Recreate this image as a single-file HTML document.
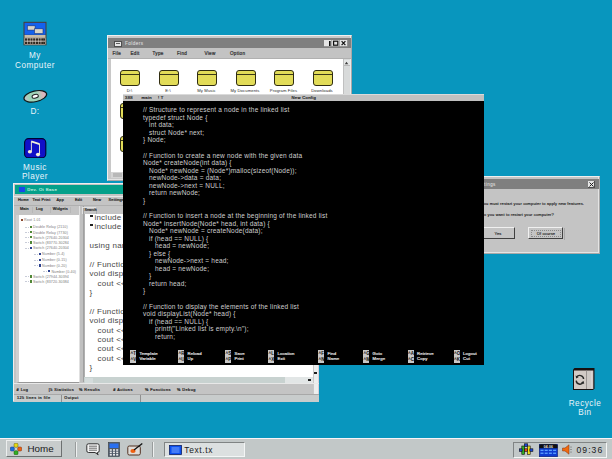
<!DOCTYPE html>
<html><head><meta charset="utf-8">
<style>
*{margin:0;padding:0;box-sizing:border-box}
html,body{width:612px;height:459px;overflow:hidden}
body{position:relative;background:#0896be;font-family:"Liberation Sans",sans-serif;color:#000}
.a{position:absolute}
.t{position:absolute;white-space:nowrap;line-height:1}
.dl{color:#e8f4fa;font-size:8.2px;letter-spacing:0.5px;text-align:center;transform:scaleY(1.08)}
.cl{position:absolute;white-space:pre;font-size:6.5px;letter-spacing:0.2px;line-height:7.55px;color:#d0d0d0}
.es{font-size:4.2px;color:#202020;letter-spacing:0.3px;-webkit-text-stroke:0.2px #202020}
.kb{position:absolute;top:256px;width:6px;height:12.5px;background:#c8c8c8}
.kk{position:absolute;left:0.5px;font-size:4.5px;line-height:5px;color:#101010;font-weight:bold;white-space:nowrap}
.kl{position:absolute;font-size:4.2px;line-height:5px;color:#e0e0e0;letter-spacing:0.15px;white-space:nowrap;-webkit-text-stroke:0.2px #e0e0e0}
.tb{position:absolute;top:4.5px;width:7.5px;height:6.5px;background:#e8e8e8;border-right:1px solid #404040;border-bottom:1px solid #404040}
.mi{font-size:4.6px;color:#303030;letter-spacing:0.3px;-webkit-text-stroke:0.2px #303030}
.fd{position:absolute;width:20px;height:16px;background:#e2dc58;border:1.3px solid #302c10;border-radius:3px}
.fdl{position:absolute;left:0;top:3px;width:100%;height:1.2px;background:#3a3818}
.fl{position:absolute;width:44px;text-align:center;font-size:4.2px;color:#282828;white-space:nowrap;line-height:5px;letter-spacing:0.1px}
.dm{font-size:3.8px;color:#202020;letter-spacing:0.2px;-webkit-text-stroke:0.2px #202020}
.dc{position:absolute;white-space:pre;font-size:8px;letter-spacing:0.25px;line-height:9px;color:#484848}
.dt{position:absolute;white-space:nowrap;font-size:3.6px;line-height:4.5px;color:#7a7a7a;letter-spacing:0.1px}
.dg{font-size:4px;color:#202020;letter-spacing:0.13px;-webkit-text-stroke:0.12px #202020}
</style></head><body>

<!-- Desktop icons -->
<svg class="a" id="mycomp" style="left:23px;top:21px" width="24" height="25" viewBox="0 0 24 25">
  <rect x="0.5" y="0.8" width="23" height="23.5" fill="#4a3c30"/>
  <rect x="1.5" y="1.8" width="21" height="12" fill="#1462ee"/>
  <rect x="4.3" y="4.8" width="7.8" height="4.3" fill="#d8d4c8" stroke="#103080" stroke-width="0.6"/>
  <rect x="11.5" y="7.8" width="8.5" height="4.8" fill="#d8d4c8" stroke="#103080" stroke-width="0.6"/>
  <rect x="1.5" y="14" width="21" height="2.5" fill="#c8bca8"/>
  <rect x="1.5" y="16.5" width="21" height="7" fill="#e0d8d0"/>
  <g fill="#302820"><rect x="2" y="17.3" width="2.2" height="2.4"/><rect x="4.7" y="17.3" width="2.2" height="2.4"/><rect x="7.4" y="17.3" width="2.2" height="2.4"/><rect x="10.1" y="17.3" width="2.2" height="2.4"/><rect x="12.8" y="17.3" width="2.2" height="2.4"/><rect x="15.5" y="17.3" width="2.2" height="2.4"/><rect x="18.2" y="17.3" width="2.2" height="2.4"/><rect x="20.2" y="17.3" width="1.8" height="2.4"/>
  <rect x="2" y="20.6" width="2.2" height="2.4"/><rect x="4.7" y="20.6" width="2.2" height="2.4"/><rect x="7.4" y="20.6" width="2.2" height="2.4"/><rect x="10.1" y="20.6" width="2.2" height="2.4"/><rect x="12.8" y="20.6" width="2.2" height="2.4"/><rect x="15.5" y="20.6" width="2.2" height="2.4"/><rect x="18.2" y="20.6" width="2.2" height="2.4"/><rect x="20.2" y="20.6" width="1.8" height="2.4"/></g>
</svg>
<div class="t dl" style="left:10px;top:51.8px;width:50px">My</div>
<div class="t dl" style="left:10px;top:61.8px;width:50px">Computer</div>

<svg class="a" style="left:22px;top:89px" width="27" height="15" viewBox="0 0 27 15">
  <defs><linearGradient id="dg" x1="0" y1="0" x2="1" y2="0">
  <stop offset="0" stop-color="#c8c0c8"/><stop offset="0.25" stop-color="#9cd4b8"/><stop offset="0.6" stop-color="#a0d4b8"/><stop offset="0.85" stop-color="#e0b4bc"/><stop offset="1" stop-color="#c8b8d0"/></linearGradient></defs>
  <ellipse cx="13.3" cy="7.3" rx="11.6" ry="5.3" transform="rotate(-13 13.3 7.3)" fill="url(#dg)" stroke="#101818" stroke-width="1.2"/>
  <ellipse cx="13.2" cy="7.3" rx="3.2" ry="1.8" transform="rotate(-13 13.2 7.3)" fill="#fff" stroke="#202020" stroke-width="1"/>
</svg>
<div class="t dl" style="left:10px;top:107.8px;width:50px">D:</div>

<svg class="a" style="left:24px;top:137.5px" width="22.5" height="20.5" viewBox="0 0 22.5 20.5">
  <rect x="0.6" y="0.6" width="21.2" height="19.3" rx="4" fill="#1010c8" stroke="#000030" stroke-width="1.1"/>
  <path d="M7.4 13.6 V3.6" stroke="#f4f0d8" stroke-width="0.9" fill="none"/>
  <path d="M7.2 3.4 L15.6 6.2" stroke="#f4f0d8" stroke-width="1.8" fill="none"/>
  <path d="M15.5 6 V16.5" stroke="#f4f0d8" stroke-width="0.9" fill="none"/>
  <ellipse cx="5.9" cy="13.7" rx="2.1" ry="1.8" fill="#f4f0d8"/>
  <ellipse cx="14" cy="16.6" rx="2.1" ry="1.8" fill="#f4f0d8"/>
</svg>
<div class="t dl" style="left:10px;top:163.8px;width:50px">Music</div>
<div class="t dl" style="left:10px;top:172.8px;width:50px">Player</div>

<!-- Recycle bin -->
<svg class="a" style="left:572px;top:367px" width="24" height="24" viewBox="0 0 24 24">
  <path d="M1 2.5 L2.5 1 H22.5 V21.5 L21 23 H1 Z" fill="#181010"/>
  <rect x="2" y="3.5" width="12.5" height="18.5" fill="#d2cac6"/>
  <rect x="14.5" y="3.5" width="6.8" height="18.5" fill="#cfc9c6"/>
  <path d="M14.5 3.5 V22" stroke="#9a9492" stroke-width="0.9"/>
  <path d="M19.8 4 V21.5" stroke="#e8e4e2" stroke-width="0.6"/>
  <path d="M11.6 12 A3.8 3.8 0 0 0 4.6 10.2" stroke="#282828" stroke-width="1.4" fill="none"/>
  <path d="M4.2 13.6 A3.8 3.8 0 0 0 11.2 15.4" stroke="#282828" stroke-width="1.4" fill="none"/>
  <path d="M3.6 8.6 L4.2 11.6 L6.8 10 Z M12.2 17 L11.6 14 L9 15.6 Z" fill="#282828"/>
</svg>
<div class="t dl" style="left:560px;top:399.8px;width:50px">Recycle</div>
<div class="t dl" style="left:560px;top:408.8px;width:50px">Bin</div>

<!-- Folders window -->
<div class="a" id="folders" style="left:107px;top:35px;width:245px;height:146px;background:#c8c8c8;border:1px solid #f0f0f0;border-right-color:#a8a8a8;border-bottom-color:#a8a8a8;box-shadow:inset -1px -1px 0 #e4e4e4">
  <div class="a" style="left:0;top:2px;width:243px;height:10px;background:#7f7f7f"></div>
  <div class="a" style="left:6px;top:4.5px;width:8px;height:6.5px;background:#e8e8e8;border:1px solid #505050"></div>
  <div class="a" style="left:8px;top:7px;width:4px;height:1px;background:#606060"></div>
  <div class="t" style="left:17px;top:6.2px;font-size:4.6px;color:#d0d0d0;letter-spacing:0.45px;-webkit-text-stroke:0.15px #d0d0d0">Folders</div>
  <svg class="a" style="left:216px;top:3.5px" width="24" height="7" viewBox="0 0 24 7">
    <rect x="0" y="0" width="23.2" height="6.5" fill="#e4e4e4"/>
    <path d="M0 6.5 H23.2 M7.7 0 V6.5 M15.4 0 V6.5" stroke="#8a8a8a" stroke-width="0.7"/>
    <rect x="5" y="1" width="1.6" height="5" fill="#101010"/>
    <rect x="9.6" y="1.2" width="4.2" height="4" fill="none" stroke="#101010" stroke-width="1.2"/>
    <path d="M17.6 1.2 L21.4 5.2 M21.4 1.2 L17.6 5.2" stroke="#101010" stroke-width="1.2"/>
  </svg>
  <div class="a" style="left:0;top:12px;width:243px;height:10.5px;background:#c3c3c3;border-bottom:0.7px solid #b0b0b0"></div>
  <div class="t mi" style="left:4.5px;top:16.4px">File</div>
  <div class="t mi" style="left:22.5px;top:16.4px">Edit</div>
  <div class="t mi" style="left:44.5px;top:16.4px">Type</div>
  <div class="t mi" style="left:69px;top:16.4px">Find</div>
  <div class="t mi" style="left:96.5px;top:16.4px">View</div>
  <div class="t mi" style="left:122px;top:16.4px">Option</div>
  <div class="a" style="left:3px;top:23px;width:231.5px;height:113px;background:#fff;overflow:hidden">

  </div>
<div class="fd" style="left:12.3px;top:34px"><div class="fdl"></div></div>
<div class="fl" style="left:-0.5px;top:51.7px">D:\</div>
<div class="fd" style="left:50.8px;top:34px"><div class="fdl"></div></div>
<div class="fl" style="left:38.0px;top:51.7px">E:\</div>
<div class="fd" style="left:89.3px;top:34px"><div class="fdl"></div></div>
<div class="fl" style="left:76.5px;top:51.7px">My Music</div>
<div class="fd" style="left:127.8px;top:34px"><div class="fdl"></div></div>
<div class="fl" style="left:115.0px;top:51.7px">My Documents</div>
<div class="fd" style="left:166.3px;top:34px"><div class="fdl"></div></div>
<div class="fl" style="left:153.5px;top:51.7px">Program Files</div>
<div class="fd" style="left:204.8px;top:34px"><div class="fdl"></div></div>
<div class="fl" style="left:192.0px;top:51.7px">Downloads</div>
<div class="fd" style="left:12.3px;top:67px"><div class="fdl"></div></div>
<div class="fd" style="left:50.8px;top:67px"><div class="fdl"></div></div>
<div class="fd" style="left:89.3px;top:67px"><div class="fdl"></div></div>
<div class="fd" style="left:127.8px;top:67px"><div class="fdl"></div></div>
<div class="fd" style="left:166.3px;top:67px"><div class="fdl"></div></div>
<div class="fd" style="left:204.8px;top:67px"><div class="fdl"></div></div>
<div class="fd" style="left:12.3px;top:100px"><div class="fdl"></div></div>
<div class="fd" style="left:50.8px;top:100px"><div class="fdl"></div></div>
<div class="fd" style="left:89.3px;top:100px"><div class="fdl"></div></div>
<div class="fd" style="left:127.8px;top:100px"><div class="fdl"></div></div>
<div class="fd" style="left:166.3px;top:100px"><div class="fdl"></div></div>
<div class="fd" style="left:204.8px;top:100px"><div class="fdl"></div></div>
  <div class="a" style="left:234.5px;top:23px;width:7px;height:113px;background:#d8dada;border-left:1px solid #c0c0c0"></div>
  <div class="a" style="left:235.5px;top:24px;width:6px;height:6px;background:#e4e6e6;border-bottom:0.6px solid #b8b8b8"></div>
  <svg class="a" style="left:236px;top:25px" width="5" height="4"><path d="M2.5 0.8 L4.3 3.2 H0.7 Z" fill="#404040"/></svg>
  <div class="a" style="left:241.5px;top:23px;width:1.5px;height:113px;background:#e8e8e8"></div>
  <div class="a" style="left:3px;top:136px;width:233px;height:6px;background:#d4d4d4"></div>
  <div class="a" style="left:5px;top:137px;width:9px;height:4px;background:#b8b8b8"></div>
</div>

<!-- Dev window -->
<div class="a" id="dev" style="left:13px;top:183px;width:306px;height:219px;background:#c4c4c4;border:1px solid #eeeeee;border-right-color:#a8a8a8;border-bottom-color:#a8a8a8;box-shadow:inset -1px -1px 0 #e4e4e4">
<div class="a" style="left:1px;top:1px;width:303px;height:8.8px;background:#04a08a"></div>
<div class="a" style="left:4.8px;top:2.8px;width:6.4px;height:5px;background:#1848e8"></div>
<div class="t" style="left:13.2px;top:3.6px;font-size:4.2px;color:#c0f0e0;letter-spacing:0.45px;-webkit-text-stroke:0.15px #c0f0e0">Dev. Ot Base</div>
<div class="a" style="left:0;top:12px;width:305px;height:1px;background:#e8e8e8"></div>
<div class="t dm" style="left:3.8999999999999986px;top:14.7px">Home</div>
<div class="t dm" style="left:18.6px;top:14.7px">Text Print</div>
<div class="t dm" style="left:42.6px;top:14.7px">App</div>
<div class="t dm" style="left:60.900000000000006px;top:14.7px">Edit</div>
<div class="t dm" style="left:78.9px;top:14.7px">New</div>
<div class="t dm" style="left:94.6px;top:14.7px">Settings</div>
<div class="a" style="left:0;top:21px;width:305px;height:1px;background:#b0b0b0"></div>
<div class="t dm" style="left:5.899999999999999px;top:23.6px">Main</div>
<div class="t dm" style="left:22px;top:23.6px">Log</div>
<div class="t dm" style="left:38.7px;top:23.6px">Widgets</div>
<div class="a" style="left:18.1px;top:22.5px;width:0.7px;height:6px;background:#b8b8b8"></div>
<div class="a" style="left:35.8px;top:22.5px;width:0.7px;height:6px;background:#b8b8b8"></div>
<div class="a" style="left:55.900000000000006px;top:22.5px;width:0.7px;height:6px;background:#b8b8b8"></div>
<div class="a" style="left:2px;top:31px;width:62.5px;height:168px;background:#fff;border-left:3px solid #d0d0d0;border-bottom:1px solid #989898"></div>
<div class="a" style="left:64.5px;top:22px;width:5px;height:176px;background:#c0c0c0;border-left:1px solid #e0e0e0;border-right:1px solid #a0a0a0"></div>
<div class="a" style="left:68px;top:22.8px;width:15px;height:7px;border:0.6px solid #e0e0e0;border-right-color:#a8a8a8;border-bottom:none"></div>
<div class="t dm" style="left:70.5px;top:24.5px;font-size:3.6px;letter-spacing:0.1px">Search</div>
<div class="a" style="left:69.5px;top:30px;width:230px;height:163px;background:#fff;border-left:1px solid #b0b0b0"></div>
<div class="a" style="left:69.5px;top:193px;width:229px;height:6px;background:#c8d2d0"></div>
<div class="a" style="left:70.5px;top:193.5px;width:8px;height:5px;background:#d4dcdc"></div>
<div class="a" style="left:271px;top:193px;width:27.5px;height:6px;background:#e2e6e6"></div>
<div class="a" style="left:298.5px;top:28.5px;width:6.5px;height:189px;background:#eceeee;border-left:1px solid #c8c8c8;border-right:1px solid #d8d0d8"></div>

<div class="a" style="left:294px;top:195px;width:3px;height:2px;background:#202020"></div>
<div class="a" style="left:300px;top:188px;width:3px;height:2px;background:#202020"></div>
<div class="dc" style="left:75.6px;top:29.00px"><span style="display:inline-block;width:2.6px;height:2px;background:#202020;vertical-align:top;margin:2px 1.6px 0 0.6px"></span>include &lt;iostream&gt;</div>
<div class="dc" style="left:75.6px;top:38.37px"><span style="display:inline-block;width:2.6px;height:2px;background:#202020;vertical-align:top;margin:2px 1.6px 0 0.6px"></span>include &lt;string&gt;</div>
<div class="dc" style="left:75.6px;top:57.12px">using namespace std;</div>
<div class="dc" style="left:75.6px;top:75.87px">// Function to display</div>
<div class="dc" style="left:75.6px;top:85.25px">void displayMessage() {</div>
<div class="dc" style="left:83.6px;top:94.62px">cout &lt;&lt; "Hello";</div>
<div class="dc" style="left:75.6px;top:104.00px">}</div>
<div class="dc" style="left:75.6px;top:122.75px">// Function to display</div>
<div class="dc" style="left:75.6px;top:132.12px">void displayInfo() {</div>
<div class="dc" style="left:83.6px;top:141.50px">cout &lt;&lt; "Name";</div>
<div class="dc" style="left:83.6px;top:150.87px">cout &lt;&lt; "Age";</div>
<div class="dc" style="left:83.6px;top:160.25px">cout &lt;&lt; "City";</div>
<div class="dc" style="left:83.6px;top:169.62px">cout &lt;&lt; "Job";</div>
<div class="dc" style="left:75.6px;top:179.00px">}</div>
<div class="a" style="left:6.800000000000001px;top:34.60px;width:2.4px;height:2.4px;background:#8a4a30"></div>
<div class="dt" style="left:10.10px;top:34.30px">Root 1.01</div>
<div class="a" style="left:15.8px;top:41.50px;width:2.4px;height:2.4px;background:#508838"></div>
<div class="dt" style="left:19.10px;top:41.20px">Double Relay (2110)</div>
<div class="a" style="left:10.8px;top:42.50px;width:4px;height:0;border-top:0.6px dotted #c8ccd8"></div>
<div class="a" style="left:15.8px;top:46.80px;width:2.4px;height:2.4px;background:#508838"></div>
<div class="dt" style="left:19.10px;top:46.50px">Double Relay (7730)</div>
<div class="a" style="left:10.8px;top:47.80px;width:4px;height:0;border-top:0.6px dotted #c8ccd8"></div>
<div class="a" style="left:15.8px;top:52.00px;width:2.4px;height:2.4px;background:#508838"></div>
<div class="dt" style="left:19.10px;top:51.70px">Switch (27640-20304</div>
<div class="a" style="left:10.8px;top:53.00px;width:4px;height:0;border-top:0.6px dotted #c8ccd8"></div>
<div class="a" style="left:15.8px;top:57.20px;width:2.4px;height:2.4px;background:#508838"></div>
<div class="dt" style="left:19.10px;top:56.90px">Switch (83770-30284</div>
<div class="a" style="left:10.8px;top:58.20px;width:4px;height:0;border-top:0.6px dotted #c8ccd8"></div>
<div class="a" style="left:15.8px;top:62.50px;width:2.4px;height:2.4px;background:#2a4090"></div>
<div class="dt" style="left:19.10px;top:62.20px">Switch (27640-20304</div>
<div class="a" style="left:10.8px;top:63.50px;width:4px;height:0;border-top:0.6px dotted #c8ccd8"></div>
<div class="a" style="left:24.799999999999997px;top:68.60px;width:2.4px;height:2.4px;background:#2a4090"></div>
<div class="dt" style="left:28.10px;top:68.30px">Number (5-4)</div>
<div class="a" style="left:19.799999999999997px;top:69.60px;width:4px;height:0;border-top:0.6px dotted #c8ccd8"></div>
<div class="a" style="left:24.799999999999997px;top:74.70px;width:2.4px;height:2.4px;background:#2a4090"></div>
<div class="dt" style="left:28.10px;top:74.40px">Number (0-15)</div>
<div class="a" style="left:19.799999999999997px;top:75.70px;width:4px;height:0;border-top:0.6px dotted #c8ccd8"></div>
<div class="a" style="left:24.799999999999997px;top:80.40px;width:2.4px;height:2.4px;background:#2a4090"></div>
<div class="dt" style="left:28.10px;top:80.10px">Number (0-20)</div>
<div class="a" style="left:19.799999999999997px;top:81.40px;width:4px;height:0;border-top:0.6px dotted #c8ccd8"></div>
<div class="a" style="left:34.1px;top:86.00px;width:2.4px;height:2.4px;background:#2a4090"></div>
<div class="dt" style="left:37.40px;top:85.70px">Number (0-40)</div>
<div class="a" style="left:29.1px;top:87.00px;width:4px;height:0;border-top:0.6px dotted #c8ccd8"></div>
<div class="a" style="left:15.8px;top:91.20px;width:2.4px;height:2.4px;background:#508838"></div>
<div class="dt" style="left:19.10px;top:90.90px">Switch (27944-30394</div>
<div class="a" style="left:10.8px;top:92.20px;width:4px;height:0;border-top:0.6px dotted #c8ccd8"></div>
<div class="a" style="left:15.8px;top:96.40px;width:2.4px;height:2.4px;background:#508838"></div>
<div class="dt" style="left:19.10px;top:96.10px">Switch (83720-30384</div>
<div class="a" style="left:10.8px;top:97.40px;width:4px;height:0;border-top:0.6px dotted #c8ccd8"></div>
<div class="a" style="left:0;top:199px;width:305px;height:1px;background:#e8e8e8"></div>
<div class="t dm" style="left:2.6px;top:205.3px;letter-spacing:0.45px"># Log</div>
<div class="t dm" style="left:34.8px;top:205.3px;letter-spacing:0.45px">[5 Statistics</div>
<div class="t dm" style="left:65.0px;top:205.3px;letter-spacing:0.45px">% Results</div>
<div class="t dm" style="left:99.3px;top:205.3px;letter-spacing:0.45px"># Actions</div>
<div class="t dm" style="left:131.0px;top:205.3px;letter-spacing:0.45px">% Functions</div>
<div class="t dm" style="left:163.0px;top:205.3px;letter-spacing:0.45px">% Debug</div>
<div class="a" style="left:0;top:209.5px;width:305px;height:1px;background:#a8a8a8"></div>
<div class="a" style="left:0;top:210.5px;width:305px;height:7.5px;background:#c8cccc"></div>
<div class="t dm" style="left:2.9px;top:213px;letter-spacing:0.5px">125 lines in file</div>
<div class="t dm" style="left:50.3px;top:213px;letter-spacing:0.5px">Output</div>
<div class="a" style="left:47px;top:211px;width:0.8px;height:6.5px;background:#909090"></div>
<div class="a" style="left:126.19999999999999px;top:211px;width:0.8px;height:6.5px;background:#909090"></div>
</div>

<!-- Dialog -->
<div class="a" id="dlg" style="left:440px;top:176px;width:160px;height:78px;background:#c4c4c4;border:1px solid #eeeeee;border-right-color:#a8a8a8;border-bottom-color:#a8a8a8;box-shadow:inset -1px -1px 0 #e4e4e4">
  <div class="a" style="left:1px;top:2px;width:157px;height:9.5px;background:#7f7f7f"></div>
  <div class="t" style="left:35px;top:5.6px;font-size:4.6px;color:#d8d8d8;letter-spacing:0.4px;-webkit-text-stroke:0.1px #d8d8d8">Settings</div>
  <div class="a" style="left:146.5px;top:3.5px;width:7px;height:7px;background:#e4e4e4;border-right:1px solid #505050;border-bottom:1px solid #505050"></div>
  <svg class="a" style="left:147.5px;top:4.5px" width="5" height="5"><path d="M0.5 0.5L4.5 4.5M4.5 0.5L0.5 4.5" stroke="#202020" stroke-width="1"/></svg>
  <div class="t dg" style="left:40.3px;top:25.2px">You must restart your computer to apply new features.</div>
  <div class="t dg" style="left:40px;top:35.5px">Do you want to restart your computer?</div>
  <div class="a" style="left:40px;top:50px;width:34px;height:12px;border:1px solid #f0f0f0;border-right-color:#404040;border-bottom-color:#404040"></div>
  <div class="t dg" style="left:53.5px;top:54.8px">Yes</div>
  <div class="a" style="left:87px;top:50px;width:35px;height:12px;border:1px solid #f0f0f0;border-right-color:#404040;border-bottom-color:#404040"></div>
  <div class="a" style="left:89.5px;top:52.5px;width:30px;height:7px;border:0.6px dotted #8a8a8a"></div>
  <div class="a" style="left:122.5px;top:50.5px;width:0.8px;height:12px;background:#a8a8a8"></div>
  <div class="t dg" style="left:95.7px;top:54.8px">Of course</div>
</div>

<!-- Editor -->
<div class="a" id="ed" style="left:123px;top:94px;width:361px;height:271px;background:#000">
  <div class="a" style="left:0;top:0;width:361px;height:1px;background:#dadada"></div>
  <div class="a" style="left:0;top:1px;width:361px;height:6px;background:#c0c0c0"></div>
  <div class="t es" style="left:2px;top:1.5px">388</div>
  <div class="t es" style="left:18.5px;top:1.5px">main</div>
  <div class="t es" style="left:35px;top:1.5px">! T</div>
  <div class="t es" style="left:168.5px;top:1.5px">New Config</div>
  <div class="a" style="left:20px;top:12.3px;width:340px;height:240px">
<div class="cl" style="top:0.00px;left:0px">// Structure to represent a node in the linked list</div>
<div class="cl" style="top:7.55px;left:0px">typedef struct Node {</div>
<div class="cl" style="top:15.10px;left:6px">int data;</div>
<div class="cl" style="top:22.65px;left:6px">struct Node* next;</div>
<div class="cl" style="top:30.20px;left:0px">} Node;</div>
<div class="cl" style="top:45.30px;left:0px">// Function to create a new node with the given data</div>
<div class="cl" style="top:52.85px;left:0px">Node* createNode(int data) {</div>
<div class="cl" style="top:60.40px;left:6px">Node* newNode = (Node*)malloc(sizeof(Node));</div>
<div class="cl" style="top:67.95px;left:6px">newNode-&gt;data = data;</div>
<div class="cl" style="top:75.50px;left:6px">newNode-&gt;next = NULL;</div>
<div class="cl" style="top:83.05px;left:6px">return newNode;</div>
<div class="cl" style="top:90.60px;left:0px">}</div>
<div class="cl" style="top:105.70px;left:0px">// Function to insert a node at the beginning of the linked list</div>
<div class="cl" style="top:113.25px;left:0px">Node* insertNode(Node* head, int data) {</div>
<div class="cl" style="top:120.80px;left:6px">Node* newNode = createNode(data);</div>
<div class="cl" style="top:128.35px;left:6px">if (head == NULL) {</div>
<div class="cl" style="top:135.90px;left:12px">head = newNode;</div>
<div class="cl" style="top:143.45px;left:6px">} else {</div>
<div class="cl" style="top:151.00px;left:12px">newNode-&gt;next = head;</div>
<div class="cl" style="top:158.55px;left:12px">head = newNode;</div>
<div class="cl" style="top:166.10px;left:6px">}</div>
<div class="cl" style="top:173.65px;left:6px">return head;</div>
<div class="cl" style="top:181.20px;left:0px">}</div>
<div class="cl" style="top:196.30px;left:0px">// Function to display the elements of the linked list</div>
<div class="cl" style="top:203.85px;left:0px">void displayList(Node* head) {</div>
<div class="cl" style="top:211.40px;left:6px">if (head == NULL) {</div>
<div class="cl" style="top:218.95px;left:12px">printf(&quot;Linked list is empty.\n&quot;);</div>
<div class="cl" style="top:226.50px;left:12px">return;</div>
  </div>
<div class="kb" style="left:7px"><div class="kk" style="top:1px">^T</div><div class="kk" style="top:6.5px">^V</div></div>
<div class="kl" style="left:16.5px;top:257.3px">Template</div><div class="kl" style="left:16.5px;top:262.1px">Variable</div>
<div class="kb" style="left:55px"><div class="kk" style="top:1px">^R</div><div class="kk" style="top:6.5px">^U</div></div>
<div class="kl" style="left:64.5px;top:257.3px">Reload</div><div class="kl" style="left:64.5px;top:262.1px">Up</div>
<div class="kb" style="left:102px"><div class="kk" style="top:1px">^S</div><div class="kk" style="top:6.5px">^P</div></div>
<div class="kl" style="left:111.5px;top:257.3px">Save</div><div class="kl" style="left:111.5px;top:262.1px">Print</div>
<div class="kb" style="left:145px"><div class="kk" style="top:1px">^L</div><div class="kk" style="top:6.5px">^X</div></div>
<div class="kl" style="left:154.5px;top:257.3px">Location</div><div class="kl" style="left:154.5px;top:262.1px">Exit</div>
<div class="kb" style="left:195px"><div class="kk" style="top:1px">^F</div><div class="kk" style="top:6.5px">^N</div></div>
<div class="kl" style="left:204.5px;top:257.3px">Find</div><div class="kl" style="left:204.5px;top:262.1px">Name</div>
<div class="kb" style="left:240px"><div class="kk" style="top:1px">^G</div><div class="kk" style="top:6.5px">^M</div></div>
<div class="kl" style="left:249.5px;top:257.3px">Goto</div><div class="kl" style="left:249.5px;top:262.1px">Merge</div>
<div class="kb" style="left:284.5px"><div class="kk" style="top:1px">^A</div><div class="kk" style="top:6.5px">^C</div></div>
<div class="kl" style="left:294.0px;top:257.3px">Retrieve</div><div class="kl" style="left:294.0px;top:262.1px">Copy</div>
<div class="kb" style="left:330.5px"><div class="kk" style="top:1px">^O</div><div class="kk" style="top:6.5px">^K</div></div>
<div class="kl" style="left:340.0px;top:257.3px">Logout</div><div class="kl" style="left:340.0px;top:262.1px">Cut</div>
</div>

<!-- Taskbar -->
<div class="a" id="taskbar" style="left:0;top:438px;width:612px;height:21px;background:#c2c8c8;border-top:1px solid #f8f4f8">
  <div class="a" style="left:5.5px;top:1px;width:56px;height:17px;background:#c8cccc;border:1px solid #eceeee;border-right-color:#6c7070;border-bottom-color:#6c7070"></div>
  <svg class="a" style="left:10px;top:4px" width="12" height="12" viewBox="0 0 12 12">
    <rect x="4" y="0.3" width="4" height="4" rx="1.2" fill="#e8d810" stroke="#5a5a20" stroke-width="0.5"/>
    <rect x="0.3" y="4" width="4" height="4" rx="1.2" fill="#1870e0" stroke="#203070" stroke-width="0.5"/>
    <rect x="7.7" y="4" width="4" height="4" rx="1.2" fill="#f06010" stroke="#703010" stroke-width="0.5"/>
    <rect x="4" y="7.7" width="4" height="4" rx="1.2" fill="#30b020" stroke="#205010" stroke-width="0.5"/>
  </svg>
  <div class="t" style="left:27.5px;top:5.2px;font-size:9.8px;color:#1a1a1a;letter-spacing:0px">Home</div>
  <div class="a" style="left:74.5px;top:3px;width:1px;height:15px;background:#989c9c;box-shadow:1px 0 0 #eef0f0"></div>
  <svg class="a" style="left:85.5px;top:4px" width="14" height="13" viewBox="0 0 14 13">
    <path d="M2.5 0.8 H11.5 Q13.2 0.8 13.2 2.5 V7.8 Q13.2 9.5 11.5 9.5 H11 L12.2 11.8 L9 9.5 H2.5 Q0.8 9.5 0.8 7.8 V2.5 Q0.8 0.8 2.5 0.8 Z" fill="#f4f4f4" stroke="#202020" stroke-width="0.9"/>
    <path d="M3 3.2 H11 M3 5.2 H11 M3 7.2 H11" stroke="#303030" stroke-width="0.7"/>
  </svg>
  <svg class="a" style="left:107.5px;top:3px" width="12" height="15" viewBox="0 0 12 15">
    <rect x="0.5" y="0.5" width="11" height="13.8" fill="#505a68" stroke="#303840" stroke-width="0.6"/>
    <rect x="1.5" y="1.5" width="9" height="4.5" fill="#2a70f0"/>
    <g fill="#e8e8e8"><rect x="1.8" y="7.2" width="2" height="1.6"/><rect x="5" y="7.2" width="2" height="1.6"/><rect x="8.2" y="7.2" width="2" height="1.6"/>
    <rect x="1.8" y="9.6" width="2" height="1.6"/><rect x="5" y="9.6" width="2" height="1.6"/><rect x="8.2" y="9.6" width="2" height="1.6"/>
    <rect x="1.8" y="12" width="2" height="1.6"/><rect x="5" y="12" width="2" height="1.6"/><rect x="8.2" y="12" width="2" height="1.6"/></g>
  </svg>
  <svg class="a" style="left:126.5px;top:3.5px" width="16" height="13" viewBox="0 0 16 13">
    <rect x="0.8" y="3" width="12.5" height="9" rx="1.5" fill="#e0dcd8" stroke="#503020" stroke-width="1"/>
    <ellipse cx="6" cy="8" rx="2.6" ry="1.9" fill="#f06010"/>
    <path d="M7 7 L15.3 0.5" stroke="#101010" stroke-width="1.3"/>
  </svg>
  <div class="a" style="left:152px;top:3px;width:1px;height:15px;background:#989c9c;box-shadow:1px 0 0 #eef0f0"></div>
  <div class="a" style="left:163.5px;top:2.5px;width:81.5px;height:15px;background:#dce0e0;border:1px solid #f4f6f6;border-top-color:#808484;border-left-color:#808484"></div>
  <svg class="a" style="left:168.5px;top:5.5px" width="13" height="10" viewBox="0 0 13 10">
    <rect x="0.5" y="0.5" width="12" height="9" fill="#0c50f0" stroke="#102060" stroke-width="0.8"/>
    <path d="M2.5 3 H10.5 M2.5 5 H10.5 M2.5 7 H10.5" stroke="#9cc0ff" stroke-width="0.8"/>
  </svg>
  <div class="t" style="left:184.3px;top:6.8px;font-size:8.4px;color:#1a1a1a;letter-spacing:0.65px">Text.tx</div>
  <div class="a" style="left:513px;top:2.5px;width:93.5px;height:16.5px;border:1px solid #f4f6f6;border-top-color:#808484;border-left-color:#808484"></div>
  <svg class="a" style="left:516px;top:2px" width="20" height="16" viewBox="0 0 20 16">
    <g stroke="#101010" stroke-width="0.6">
    <rect x="8.3" y="2.8" width="3.4" height="2.8" fill="#1848d8"/>
    <rect x="5.8" y="5" width="2.8" height="8.3" fill="#30b020"/>
    <rect x="11.4" y="5" width="2.8" height="8.3" fill="#f0e010"/>
    <rect x="3.3" y="7.8" width="2.8" height="2.6" fill="#1848d8"/>
    <rect x="13.9" y="7.8" width="3" height="2.6" fill="#1848d8"/>
    <rect x="8.6" y="7.8" width="2.8" height="2.6" fill="#e85010"/>
    </g>
  </svg>
  <svg class="a" style="left:539px;top:4.5px" width="19" height="13" viewBox="0 0 19 13">
    <rect x="0.3" y="0.3" width="18.2" height="12.4" fill="#0c3cd0" stroke="#0a1a70" stroke-width="0.6"/>
    <path d="M0.3 4.3 V1.5 L1.5 0.3 H17.3 L18.5 1.5 V4.3 Z" fill="#101010"/>
    <text x="9.4" y="3.6" font-size="3.4" fill="#e8e8e8" text-anchor="middle" font-family="Liberation Sans" font-weight="bold" letter-spacing="0.2">04.06</text>
    <g fill="#5aa0ff"><rect x="1.5" y="5.7" width="3" height="1.3"/><rect x="5.7" y="5.7" width="3" height="1.3"/><rect x="9.9" y="5.7" width="3" height="1.3"/><rect x="14.1" y="5.7" width="3" height="1.3"/>
    <rect x="1.5" y="8.6" width="3" height="1.3"/><rect x="5.7" y="8.6" width="3" height="1.3"/><rect x="9.9" y="8.6" width="3" height="1.3"/><rect x="14.1" y="8.6" width="3" height="1.3"/></g>
  </svg>
  <svg class="a" style="left:561.5px;top:5px" width="10" height="11" viewBox="0 0 10 11">
    <path d="M0.5 4 H3 L7 0.8 V10.2 L3 7 H0.5 Z" fill="#f06a10" stroke="#803010" stroke-width="0.5"/>
    <circle cx="9" cy="3" r="0.5" fill="#404040"/><circle cx="9" cy="5.5" r="0.5" fill="#404040"/><circle cx="9" cy="8" r="0.5" fill="#404040"/>
  </svg>
  <div class="t" style="left:576.5px;top:6.6px;font-size:8.6px;color:#1a1a1a;letter-spacing:1.05px">09:36</div>
</div>

</body></html>
